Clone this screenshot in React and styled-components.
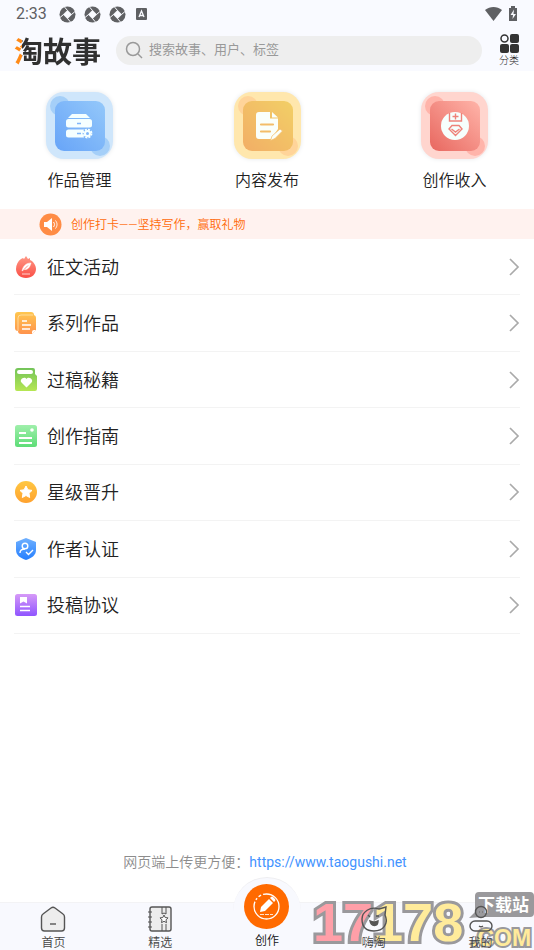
import React from 'react';
import styled, { createGlobalStyle } from 'styled-components';

const GlobalStyle = createGlobalStyle`
  * { box-sizing: border-box; }
  body { margin: 0; background: #fff; }
  body, button, input { font-family: Roboto, "Noto Sans CJK SC", sans-serif; }
  button { border: 0; padding: 0; background: none; color: inherit; cursor: pointer; }
`;

const Page = styled.div`
  min-height: 100vh;
  display: flex;
  flex-direction: column;
  color: #222;
  overflow: hidden;
`;
const Header = styled.header`
  background: #f9faff;
`;
const StatusBar = styled.div`
  display: flex;
  align-items: center;
  height: 28px;
  padding: 0 16px;
  color: #5f6063;
`;
const Clock = styled.time`
  font-size: 16px;
  line-height: 28px;
  margin-right: 12px;
`;
const StatusIcons = styled.div`
  display: flex;
  align-items: center;
  gap: 8px;
  flex: 1;
`;
const SearchBar = styled.div`
  display: flex;
  align-items: center;
  height: 43px;
  padding: 0 15px 0 14px;
`;
const Logo = styled.h1`
  margin: 0 15px 0 0;
  font: 700 29px/42px "Noto Sans CJK SC", sans-serif;
  color: transparent;
  background: linear-gradient(90deg, #ff8a17 8px, #303030 8px);
  background-clip: text;
  -webkit-background-clip: text;
`;
const SearchField = styled.label`
  flex: 1;
  min-width: 0;
  height: 29px;
  margin-top: 1px;
  padding: 0 8px 0 9px;
  display: flex;
  align-items: center;
  gap: 6px;
  border-radius: 15px;
  background: #eee;
`;
const SearchInput = styled.input`
  flex: 1;
  min-width: 0;
  border: 0;
  padding: 0;
  outline: 0;
  background: none;
  font-size: 13px;
  line-height: 20px;
  &::placeholder { color: #999; opacity: 1; }
`;
const CategoryButton = styled.button`
  margin-left: 17px;
  display: flex;
  flex-direction: column;
  align-items: center;
  gap: 1px;
  padding-top: 2px;
  font-size: 10px;
  font-weight: 300;
  line-height: 14px;
`;
const Tiles = styled.section`
  display: flex;
  justify-content: space-between;
  padding: 21px 40px 16px;
`;
const Tile = styled.button`
  width: 79px;
  display: flex;
  flex-direction: column;
  align-items: center;
  gap: 10px;
  font-size: 16px;
  font-weight: 350;
  line-height: 24px;
  svg { filter: drop-shadow(0 0 2px #e4e7ea); }
`;
const Banner = styled.button`
  display: flex;
  align-items: center;
  gap: 9px;
  height: 30px;
  padding: 0 39px;
  background: #fff2ef;
  color: #ff6a0a;
  font-size: 12px;
  font-weight: 350;
  line-height: 20px;
`;
const BannerText = styled.span`
  padding-top: 2px;
`;
const Menu = styled.nav`
  display: grid;
  grid-auto-rows: 1fr;
  min-height: 395px;
  padding: 0 14px;
`;
const MenuRow = styled.button`
  display: flex;
  align-items: center;
  gap: 9px;
  border-bottom: 1px solid #f3f3f3;
  font-size: 18px;
  font-weight: 350;
  line-height: 26px;
  text-align: left;
`;
const MenuLabel = styled.span`
  flex: 1;
  padding-top: 2px;
`;
const WebHint = styled.p`
  margin: auto 0 30px;
  padding-right: 4px;
  text-align: center;
  font-size: 14px;
  font-weight: 350;
  line-height: 20px;
  color: #8c8c8c;
  a { color: #4293ff; font-weight: 400; text-decoration: none; }
`;
const TabBar = styled.nav`
  position: relative;
  display: grid;
  grid-template-columns: repeat(5, 1fr);
  grid-template-rows: minmax(0, 1fr);
  height: 48px;
  background: #f8f9fe;
  border-top: 1px solid #f3f3f5;
`;
const Tab = styled.button`
  position: relative;
  display: flex;
  flex-direction: column;
  align-items: center;
  justify-content: flex-end;
  font-size: 12px;
  font-weight: 350;
  line-height: 14px;
  gap: 3px;
  color: #444;
`;
const CreateTab = styled(Tab)`
  color: #111;
  padding-bottom: 2px;
`;
const Bump = styled.span`
  flex: none;
  width: 68px;
  height: 54px;
  padding-top: 6px;
  display: flex;
  justify-content: center;
  border-radius: 34px 34px 0 0;
  border-top: 1px solid #eeeef1;
  background: #f8f9fe;
`;
const Stamp = styled.svg`
  position: absolute;
  right: 0;
  bottom: 0;
  pointer-events: none;
`;

const Shutter = () => (
  <svg width="17" height="17" viewBox="0 0 17 17" aria-hidden="true">
    <circle cx="8.500" cy="8.500" r="8" fill="#5f6063" />
    <path d="M8.500 4l4.500 4.500-4.500 4.500L4 8.500z" fill="#f9faff" />
    <path d="M8.500 4.500L5.500 1M12.500 8.500L16 5.500M8.500 12.500l3 3.500M4.500 8.500L1 11.500" stroke="#f9faff" strokeWidth="1" />
  </svg>
);

const TileArt = ({ id, outer, from, to, blob, children }) => (
  <svg width="67" height="67" viewBox="0 0 67 67" aria-hidden="true">
    <defs>
      <linearGradient id={id} x1="0" y1="1" x2="1" y2="0">
        <stop stopColor={from} /><stop offset="1" stopColor={to} />
      </linearGradient>
      <clipPath id={`${id}c`}><rect width="67" height="67" rx="18" /></clipPath>
    </defs>
    <rect width="67" height="67" rx="18" fill={outer} />
    <g fill={blob} clipPath={`url(#${id}c)`}><circle cx="14" cy="14" r="10" /><circle cx="54" cy="54" r="10" /></g>
    <rect x="9" y="9" width="50" height="50" rx="9" fill={`url(#${id})`} />
    {children}
  </svg>
);

const tiles = [
  { label: '作品管理', art: (
    <TileArt id="t1" outer="#cfe6fb" from="#67a4f8" to="#94c8fa" blob="#a5cff8">
      <g fill="#f5ffff">
        <path d="M26 22h14l4 4H22z" />
        <rect x="20" y="27" width="26" height="8.500" rx="2.500" />
        <path d="M22.500 37.500H38l-1.500 4 1.500 4H22.500a2.500 2.500 0 0 1-2.500-2.500v-3a2.500 2.500 0 0 1 2.500-2.500z" />
        <circle cx="41.500" cy="41.500" r="3.500" />
      </g>
      <circle cx="41.500" cy="41.500" r="4" fill="none" stroke="#f5ffff" strokeWidth="1.800" strokeDasharray="2 1.140" />
      <circle cx="41.500" cy="41.500" r="1.500" fill="#80b6f9" />
      <path d="M31 31.500h4M31 41.500h4" stroke="#80b6f9" strokeWidth="1.300" />
    </TileArt>) },
  { label: '内容发布', art: (
    <TileArt id="t2" outer="#ffe7ad" from="#f2ae66" to="#f2cf66" blob="#ffd49a">
      <path d="M25 20h11v6.500h8V37l-7 10H25a3 3 0 0 1-3-3V23a3 3 0 0 1 3-3zM38 20l6 5.500h-6z" fill="#fafffa" />
      <path d="M27 32.500h12M27 39.500h9" stroke="#f3bd68" strokeWidth="2.200" strokeLinecap="round" />
      <path d="M36.500 48.500l1.500-4.500 8-7 2.500 2-7.500 7.500z" fill="#fafffa" stroke="#f3bd68" strokeWidth=".7" />
    </TileArt>) },
  { label: '创作收入', art: (
    <TileArt id="t3" outer="#ffd5ce" from="#e8675f" to="#ffb4a9" blob="#ffb4aa">
      <circle cx="34" cy="34" r="14" fill="#f6fffd" />
      <g fill="none" stroke="#ee8279" strokeWidth="1.400">
        <path d="M28.500 21v8h12v-8M34.500 21.500v6M31.500 24.500h6M31 33.500h7l3 3.500-6.500 6.500L28 37zM30.500 37l4 3 4-3" />
      </g>
    </TileArt>) },
];

const MenuArt = ({ id, from, to, children, base }) => (
  <svg width="24" height="24" viewBox="0 0 24 24" fill="none" aria-hidden="true">
    <defs>
      <linearGradient id={id} x1="0" y1="0" x2="0" y2="24" gradientUnits="userSpaceOnUse">
        <stop stopColor={from} /><stop offset="1" stopColor={to} />
      </linearGradient>
    </defs>
    <g fill={`url(#${id})`}>{base}</g>
    {children}
  </svg>
);

const menu = [
  { label: '征文活动', art: (
    <MenuArt id="m1" from="#ff9c89" to="#fa4b43" base={<path d="M7 4l2-1 1 1 2-3 2 3 2-1v2c3 1 6 5 6 9 0 5-4 9-10 9S2 19 2 14c0-4 2-8 5-10z" />}>
      <path d="M8 16c1-5 4-8 9-8-1 4-3 7-7 6.500l-2 1.500z" fill="#fff" stroke="#fff" strokeWidth=".5" />
      <path d="M8 19h8" stroke="#ffd3cf" />
      <path d="M10 14.500l4-4" stroke="#ff7166" strokeWidth=".8" />
    </MenuArt>) },
  { label: '系列作品', art: (
    <MenuArt id="m2" from="#ffc94f" to="#ff914d" base={<><rect x="1" y="1" width="19" height="19" rx="3" /><path d="M7 4h12a3 3 0 0 1 3 3v12l-4 4H7a3 3 0 0 1-3-3V7a3 3 0 0 1 3-3z" /></>}>
      <path d="M4 20V7a3 3 0 0 1 3-3h12" stroke="#ffe4ae" strokeWidth=".8" />
      <path d="M8 10h5M8 14h9M8 18h8" stroke="#fff" strokeWidth="1.600" />
      <path d="M18 23v-2a2 2 0 0 1 2-2h2z" fill="#fff" />
    </MenuArt>) },
  { label: '过稿秘籍', art: (
    <MenuArt id="m3" from="#73c45a" to="#b9e853" base={<path d="M4 0h15a2 2 0 0 1 2 2v4l2 2v13a2 2 0 0 1-2 2H3a2 2 0 0 1-2-2V3a3 3 0 0 1 3-3z" />}>
      <rect x="3" y="2" width="16" height="4" rx="2" fill="#fff" />
      <path d="M12.500 19.500L7.500 14.600c-1.800-2 .2-4.900 2.700-4.900 1 0 1.800.5 2.300 1.300.5-.8 1.300-1.300 2.300-1.300 2.500 0 4.500 2.900 2.700 4.900z" fill="#fff" />
    </MenuArt>) },
  { label: '创作指南', art: (
    <MenuArt id="m4" from="#a2f0ad" to="#5bdc75" base={<rect x="1" y="1" width="22" height="22" rx="2.500" />}>
      <path d="M5 9h7M5 14h13M5 19h13" stroke="#fff" strokeWidth="1.800" />
      <circle cx="18" cy="6" r="1.800" fill="#fff" />
    </MenuArt>) },
  { label: '星级晋升', art: (
    <MenuArt id="m5" from="#ffc943" to="#ffa02e" base={<circle cx="12" cy="12" r="11" />}>
      <path d="M12 6l1.900 3.800 4.100.6-3 2.900.7 4.200-3.700-2-3.700 2 .7-4.200-3-2.900 4.100-.6z" fill="#fff" stroke="#fff" strokeLinejoin="round" />
    </MenuArt>) },
  { label: '作者认证', art: (
    <MenuArt id="m6" from="#73b3ff" to="#217cff" base={<path d="M12 1l10 4v8c0 5-4 8-10 10C6 21 2 18 2 13V5z" />}>
      <circle cx="11" cy="9" r="2.800" stroke="#fff" strokeWidth="1.400" />
      <path d="M6 16c0-3 2-4 5-4M12 15l2.500 2.500L19 13" stroke="#fff" strokeWidth="1.400" />
    </MenuArt>) },
  { label: '投稿协议', art: (
    <MenuArt id="m7" from="#d99df7" to="#8c51ff" base={<rect x="1" y="1" width="22" height="22" rx="2.500" />}>
      <path d="M6 4h7v6.500l-3.500-2L6 10.500z" fill="#fff" />
      <path d="M6 13.500h10M6 17.500h10" stroke="#fff" strokeWidth="1.700" />
    </MenuArt>) },
];

const tabIcon = { width: 26, height: 28, viewBox: '0 0 26 28', fill: 'none', stroke: '#555', strokeWidth: 1.4, 'aria-hidden': true };

const Watermark = () => (
  <Stamp width="224" height="62" viewBox="0 0 224 62" aria-hidden="true">
    <text x="3" y="53" fontFamily='"Liberation Sans", sans-serif' fontWeight="700" fontSize="54" stroke="#9a999c" strokeWidth="6" paintOrder="stroke" fill="#ff9fa8">17<tspan fill="#ffeb9b">178</tspan></text>
    <text x="161" y="58" fontFamily='"Liberation Sans", sans-serif' fontWeight="700" fontSize="23" fill="#ffeb9b" stroke="#9a999c" strokeWidth="4" paintOrder="stroke">.COM</text>
    <path d="M169 4h51a4 4 0 0 1 4 4v17a4 4 0 0 1-4 4h-48l-13 1 6-6V8a4 4 0 0 1 4-4z" fill="#9a999c" />
    <text x="168" y="23" fontFamily='"Noto Sans CJK SC", sans-serif' fontWeight="700" fontSize="17" fill="#fff">下载站</text>
  </Stamp>
);

export default function App() {
  return (
    <Page>
      <GlobalStyle />
      <Header>
        <StatusBar>
          <Clock>2:33</Clock>
          <StatusIcons>
            <Shutter /><Shutter /><Shutter />
            <svg width="17" height="12" viewBox="0 0 17 12" aria-hidden="true">
              <rect x="2" width="11" height="12" rx="1" fill="#5f6063" />
              <path d="M5 9l2.500-6L10 9M6 7.500h3" fill="none" stroke="#f9faff" strokeWidth="1.300" />
            </svg>
          </StatusIcons>
          <svg width="34" height="16" viewBox="0 0 34 16" fill="#5f6063" aria-hidden="true">
            <path d="M1 4c5-4 12-4 17 0L9.500 15z" />
            <path d="M27 0h4v2h2v13h-8V2h2z" />
            <path d="M30 3.500L26.500 9H29l-.5 4L32 8h-2.500z" fill="#f9faff" />
          </svg>
        </StatusBar>
        <SearchBar>
          <Logo>淘故事</Logo>
          <SearchField>
            <svg width="18" height="18" viewBox="0 0 18 18" fill="none" stroke="#999" strokeWidth="1.500" aria-hidden="true">
              <circle cx="8" cy="8" r="6.500" /><path d="M13 13l4 4" />
            </svg>
            <SearchInput type="search" aria-label="搜索" placeholder="搜索故事、用户、标签" />
          </SearchField>
          <CategoryButton>
            <svg width="19" height="19" viewBox="0 0 19 19" fill="#333" aria-hidden="true">
              <circle cx="4.500" cy="4.500" r="3.500" fill="none" stroke="#333" strokeWidth="1.500" />
              <rect x="10" y="0" width="9" height="9" rx="2" />
              <rect x="0" y="10" width="9" height="9" rx="2" />
              <rect x="10" y="10" width="9" height="9" rx="2" />
            </svg>
            分类
          </CategoryButton>
        </SearchBar>
      </Header>
      <Tiles>
        {tiles.map((t) => <Tile key={t.label}>{t.art}{t.label}</Tile>)}
      </Tiles>
      <Banner>
        <svg width="23" height="23" viewBox="0 0 23 23" aria-hidden="true">
          <circle cx="11.500" cy="11.500" r="11" fill="#ff8c45" />
          <path d="M5 9h3l5-4v13l-5-4H5z" fill="#fff" />
          <path d="M14.500 9c1.300 1.500 1.300 3.500 0 5M16.500 7.500c2 2.500 2 5.500 0 8" fill="none" stroke="#fff" />
        </svg>
        <BannerText>创作打卡——坚持写作，赢取礼物</BannerText>
      </Banner>
      <Menu>
        {menu.map((m) => (
          <MenuRow key={m.label}>
            {m.art}
            <MenuLabel>{m.label}</MenuLabel>
            <svg width="12" height="18" viewBox="0 0 12 18" fill="none" stroke="#aaa" strokeWidth="1.700" aria-hidden="true"><path d="M2 1l8 8-8 8" /></svg>
          </MenuRow>
        ))}
      </Menu>
      <WebHint>网页端上传更方便：<a href="https://www.taogushi.net">https://www.taogushi.net</a></WebHint>
      <TabBar>
        <Watermark />
        <Tab>
          <svg {...tabIcon}>
            <path d="M3 9l8-6q2-1.500 4 0l8 6q1.500 1 1.500 3v11q0 3-3 3h-17q-3 0-3-3V12q0-2 1.500-3z" fill="#ededed" />
            <path d="M10 19h6" />
          </svg>
          首页
        </Tab>
        <Tab>
          <svg {...tabIcon}>
            <rect x="3" y="2" width="21" height="24" rx="2" fill="#ededed" />
            <path d="M1 7h4M1 12h4M1 17h4M1 22h4M15 2v7l2-1 2 1V2M15 26v-7M19 26v-7" strokeWidth="1" />
            <path d="M17 10l1.200 2.500 2.800.4-2 2 .5 2.800-2.500-1.400-2.500 1.400.5-2.800-2-2 2.800-.4z" fill="#fff" strokeWidth="1" />
          </svg>
          精选
        </Tab>
        <CreateTab>
          <Bump>
            <svg width="45" height="45" viewBox="0 0 45 45" fill="none" aria-hidden="true">
              <circle cx="22.500" cy="22.500" r="22.500" fill="#ff6a00" />
              <circle cx="22.500" cy="22.500" r="12.500" stroke="#fff" strokeWidth="1.300" strokeDasharray="44 2 2 2 3 2 100 0" />
              <path d="M16 28l1-5 8-8 4 4-8 8zM26 14l1-1q1-1 2 0l2 2q1 1 0 2l-1 1z" fill="#fff" />
              <path d="M16 30.500h13" stroke="#fff" strokeWidth=".8" strokeDasharray="4 1" />
            </svg>
          </Bump>
          创作
        </CreateTab>
        <Tab>
          <svg {...tabIcon}>
            <path d="M18 4l7-2-1 8c4 9-2 16-11 16S1 21 1 14 9 1 18 4z" />
            <path d="M7 10l2 2M15 11h3M9 16q4 2 8 0c0 6-7 6-8 0z" fill="#555" />
          </svg>
          嗨淘
        </Tab>
        <Tab>
          <svg {...tabIcon}>
            <circle cx="13" cy="7" r="5.500" /><path d="M11 7h.5M14 7h.5" />
            <rect x="2" y="16" width="22" height="10" rx="5" /><path d="M11 21q2 1.500 4 0" />
          </svg>
          我的
        </Tab>
      </TabBar>
    </Page>
  );
}
